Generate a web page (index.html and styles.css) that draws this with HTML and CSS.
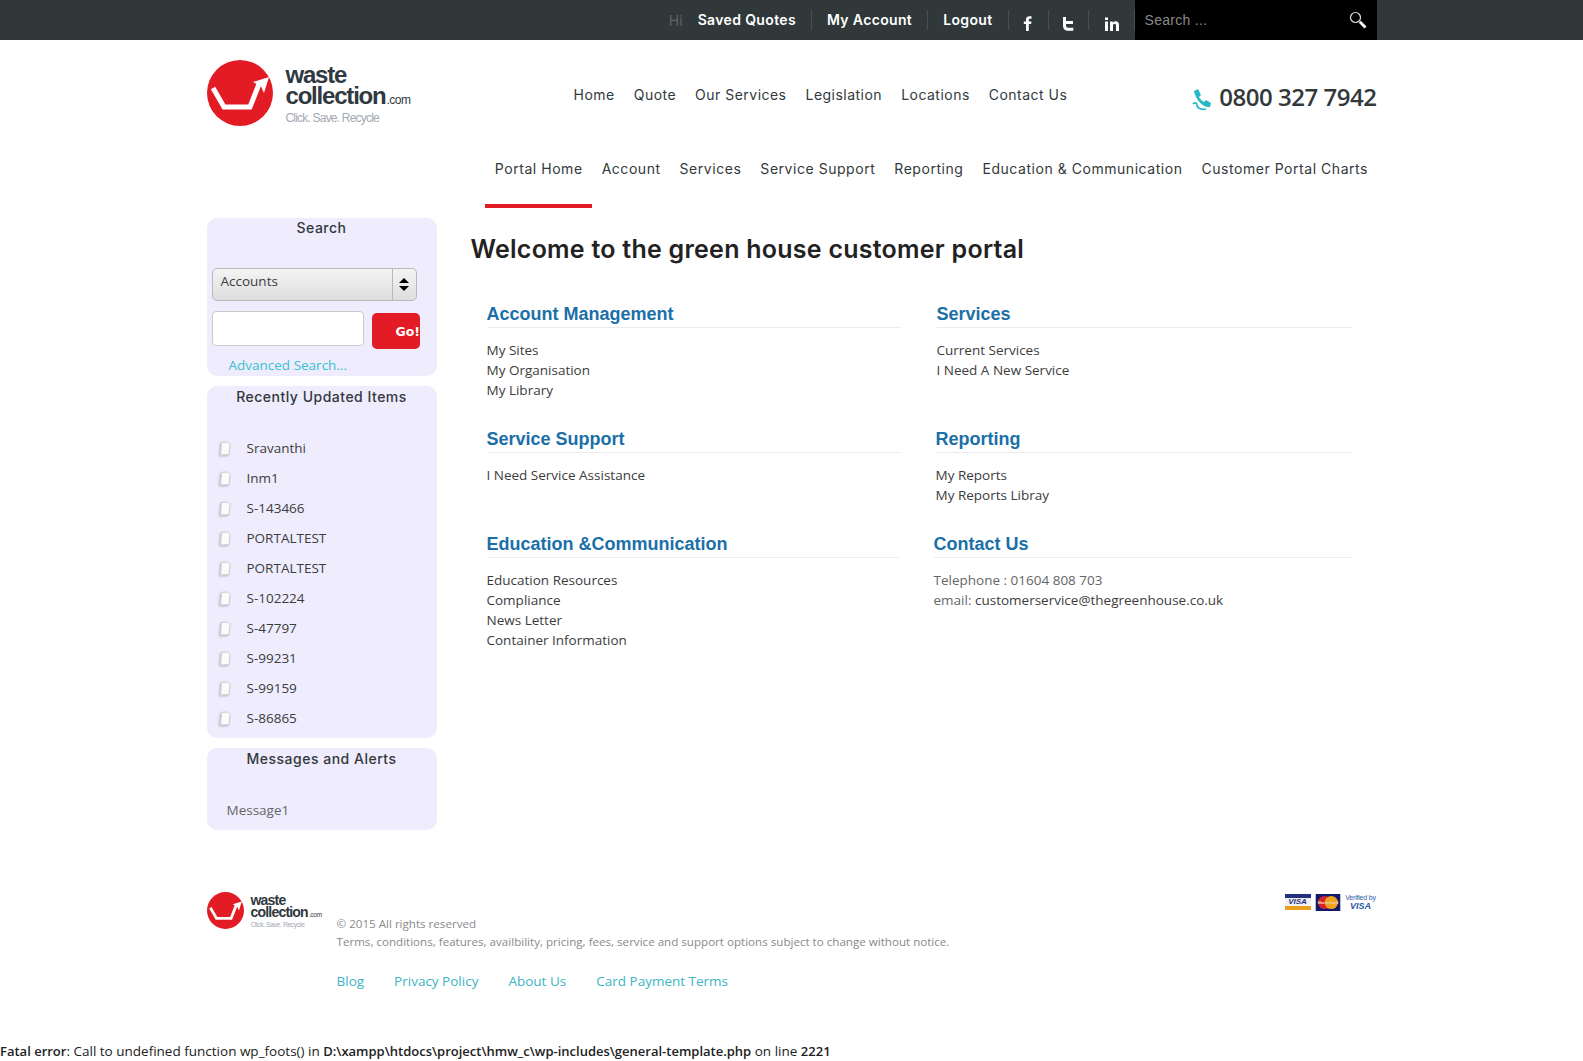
FILE: index.html
```html
<!DOCTYPE html>
<html lang="en">

<head>
  <meta charset="UTF-8">
  <meta name="viewport" content="width=device-width, initial-scale=1.0">
  <title>Customer Portal</title>
  <link rel="stylesheet" href="styles.css">
</head>

<body>
  <div class="topbar">
    <div class="wrap topbar-inner">
      <span class="hi">Hi</span>
      <a class="top-link first">Saved Quotes</a>
      <a class="top-link">My Account</a>
      <a class="top-link">Logout</a>
      <a class="top-icon">
        <svg width="10" height="15" viewBox="0 0 10 15"><path fill="#fff" d="M3 15V8H.8V5.4H3V3.6C3 1.3 4.3.2 6.3.2c1 0 1.900.1 2.200.1v2.400H7.100C6 2.700 5.800 3.300 5.800 4v1.400h2.700L8.100 8H5.800v7z"/></svg>
      </a>
      <a class="top-icon">
        <svg width="12" height="14" viewBox="0 0 12 14"><path fill="none" stroke="#fff" stroke-width="3" d="M2.500 0v8.500c0 2.500 1.500 3.800 3.800 3.800h5M2.500 5.500h8.500"/></svg>
      </a>
      <a class="top-icon last">
        <svg width="14" height="14" viewBox="0 0 14 14"><path fill="#fff" d="M0 4.500h3V14H0zM0 .5h3v2.600H0zM5 4.500h2.800v1.300C8.400 4.900 9.400 4.300 10.700 4.300 13 4.300 14 5.800 14 8.200V14h-3V8.800C11 7.500 10.500 6.800 9.500 6.800 8.500 6.800 8 7.600 8 8.800V14H5z"/></svg>
      </a>
      <div class="top-search">
        <span>Search ...</span>
        <svg width="18" height="18" viewBox="0 0 18 18"><circle cx="6.500" cy="6.500" r="5" fill="none" stroke="#ddd" stroke-width="1.200"/><path stroke="#fff" stroke-width="2.800" d="M10.800 10.800l5.700 5.700"/></svg>
      </div>
    </div>
  </div>

  <div class="wrap">
    <header class="header">
      <div class="logo">
        <svg class="logo-mark" viewBox="0 0 66 66"><circle cx="33" cy="33" r="33" fill="#e21b24"/><path fill="none" stroke="#fff" stroke-width="5" d="M6 28l11 19h26l9-23"/><path fill="#fff" d="M62 17L46 22l4.500 2.500 3.500 2 3 6.500z"/></svg>
        <div class="logo-text">
          <div class="logo-name">waste</div>
          <div class="logo-name">collection<small>.com</small></div>
          <div class="logo-tag">Click. Save. Recycle</div>
        </div>
      </div>
      <nav class="main-nav">
        <a>Home</a>
        <a>Quote</a>
        <a>Our Services</a>
        <a>Legislation</a>
        <a>Locations</a>
        <a>Contact Us</a>
      </nav>
      <div class="phone">
        <svg class="phone-icon" width="20" height="22" viewBox="0 0 20 22"><path fill="none" stroke="#27b8c6" stroke-width="1.700" d="M1 15c2-2 4-1 4 1 0 3 4 5 9 4"/><path fill="#27b8c6" d="M2 2l4-2 3 6-2 2c1 2 3 4 5 5l2-2 5 3-1 4C12 19 4 12 2 2z"/></svg>
        <span>0800 327 7942</span>
      </div>
    </header>

    <nav class="portal-nav">
      <a class="active">Portal Home</a>
      <a>Account</a>
      <a>Services</a>
      <a>Service Support</a>
      <a>Reporting</a>
      <a>Education &amp; Communication</a>
      <a>Customer Portal Charts</a>
    </nav>

    <div class="columns">
      <aside class="sidebar">
        <section class="panel panel-search">
          <h3>Search</h3>
          <div class="select">
            <span class="select-label">Accounts</span>
            <span class="select-arrows"><i class="up"></i><i class="down"></i></span>
          </div>
          <div class="search-row">
            <input class="search-input" type="text">
            <button class="go">Go!</button>
          </div>
          <a class="advanced">Advanced Search...</a>
        </section>

        <section class="panel panel-recent">
          <h3>Recently Updated Items</h3>
          <ul class="recent">
            <li><svg class="doc" viewBox="0 0 14 15"><path fill="#fbfbfb" stroke="#cfcfcf" d="M3.500 1.500l6-.5 2.500 2.500-1 10-8.500.5z"/></svg>Sravanthi</li>
            <li><svg class="doc" viewBox="0 0 14 15"><path fill="#fbfbfb" stroke="#cfcfcf" d="M3.500 1.500l6-.5 2.500 2.500-1 10-8.500.5z"/></svg>Inm1</li>
            <li><svg class="doc" viewBox="0 0 14 15"><path fill="#fbfbfb" stroke="#cfcfcf" d="M3.500 1.500l6-.5 2.500 2.500-1 10-8.500.5z"/></svg>S-143466</li>
            <li><svg class="doc" viewBox="0 0 14 15"><path fill="#fbfbfb" stroke="#cfcfcf" d="M3.500 1.500l6-.5 2.500 2.500-1 10-8.500.5z"/></svg>PORTALTEST</li>
            <li><svg class="doc" viewBox="0 0 14 15"><path fill="#fbfbfb" stroke="#cfcfcf" d="M3.500 1.500l6-.5 2.500 2.500-1 10-8.500.5z"/></svg>PORTALTEST</li>
            <li><svg class="doc" viewBox="0 0 14 15"><path fill="#fbfbfb" stroke="#cfcfcf" d="M3.500 1.500l6-.5 2.500 2.500-1 10-8.500.5z"/></svg>S-102224</li>
            <li><svg class="doc" viewBox="0 0 14 15"><path fill="#fbfbfb" stroke="#cfcfcf" d="M3.500 1.500l6-.5 2.500 2.500-1 10-8.500.5z"/></svg>S-47797</li>
            <li><svg class="doc" viewBox="0 0 14 15"><path fill="#fbfbfb" stroke="#cfcfcf" d="M3.500 1.500l6-.5 2.500 2.500-1 10-8.500.5z"/></svg>S-99231</li>
            <li><svg class="doc" viewBox="0 0 14 15"><path fill="#fbfbfb" stroke="#cfcfcf" d="M3.500 1.500l6-.5 2.500 2.500-1 10-8.500.5z"/></svg>S-99159</li>
            <li><svg class="doc" viewBox="0 0 14 15"><path fill="#fbfbfb" stroke="#cfcfcf" d="M3.500 1.500l6-.5 2.500 2.500-1 10-8.500.5z"/></svg>S-86865</li>
          </ul>
        </section>

        <section class="panel panel-messages">
          <h3>Messages and Alerts</h3>
          <p class="message">Message1</p>
        </section>
      </aside>

      <main class="content">
        <h1>Welcome to the green house customer portal</h1>
        <div class="blocks">
          <div class="block-row row-one">
            <div class="block">
              <h2><span>Account Management</span></h2>
              <a>My Sites</a>
              <a>My Organisation</a>
              <a>My Library</a>
            </div>
            <div class="block">
              <h2><span>Services</span></h2>
              <a>Current Services</a>
              <a>I Need A New Service</a>
            </div>
          </div>
          <div class="block-row row-two">
            <div class="block">
              <h2><span>Service Support</span></h2>
              <a>I Need Service Assistance</a>
            </div>
            <div class="block">
              <h2><span>Reporting</span></h2>
              <a>My Reports</a>
              <a>My Reports Libray</a>
            </div>
          </div>
          <div class="block-row row-three">
            <div class="block">
              <h2><span>Education &amp;Communication</span></h2>
              <a>Education Resources</a>
              <a>Compliance</a>
              <a>News Letter</a>
              <a>Container Information</a>
            </div>
            <div class="block">
              <h2><span>Contact Us</span></h2>
              <p class="tel">Telephone : 01604 808 703</p>
              <p class="tel">email: <a class="inline">customerservice@thegreenhouse.co.uk</a></p>
            </div>
          </div>
        </div>
      </main>
    </div>

    <footer class="footer">
      <div class="logo logo-small">
        <svg class="logo-mark" viewBox="0 0 66 66"><circle cx="33" cy="33" r="33" fill="#e21b24"/><path fill="none" stroke="#fff" stroke-width="5" d="M6 28l11 19h26l9-23"/><path fill="#fff" d="M62 17L46 22l4.500 2.500 3.500 2 3 6.500z"/></svg>
        <div class="logo-text">
          <div class="logo-name">waste</div>
          <div class="logo-name">collection<small>.com</small></div>
          <div class="logo-tag">Click. Save. Recycle</div>
        </div>
      </div>
      <div class="footer-text">
        <p>© 2015 All rights reserved</p>
        <p>Terms, conditions, features, availbility, pricing, fees, service and support options subject to change without notice.</p>
        <div class="footer-links">
          <a>Blog</a>
          <a>Privacy Policy</a>
          <a>About Us</a>
          <a>Card Payment Terms</a>
        </div>
      </div>
      <div class="cards">
        <div class="card-visa"><span>VISA</span></div>
        <svg class="card-mc" viewBox="0 0 26 18"><rect width="26" height="18" fill="#101a6b"/><circle cx="9.500" cy="9" r="7" fill="#d8232a"/><circle cx="16.500" cy="9" r="7" fill="#f0a21e"/><text x="13" y="10.500" text-anchor="middle" font-family="Liberation Sans" font-size="4" font-weight="700" fill="#f3d9c0">MasterCard</text></svg>
        <div class="card-verified">Verified by<b>VISA</b></div>
      </div>
    </footer>
  </div>

  <p class="fatal"><b>Fatal error</b>: Call to undefined function wp_foots() in <b>D:\xampp\htdocs\project\hmw_c\wp-includes\general-template.php</b> on line <b>2221</b></p>
</body>

</html>
```

FILE: styles.css
```css
* {
  box-sizing: border-box;
}

body {
  margin: 0;
  background: #fff;
  font-family: "Open Sans", sans-serif;
  font-size: 13.500px;
  color: #3c3c3c;
}

a {
  color: inherit;
  text-decoration: none;
}

.wrap {
  width: 1170px;
  margin: 0 auto;
}

/* top bar */
.topbar {
  height: 40px;
  background: #30383a;
}

.topbar-inner {
  display: flex;
  justify-content: flex-end;
  align-items: center;
  height: 40px;
  font-family: Inter, sans-serif;
}

.hi {
  color: #5d6466;
  font-size: 14px;
  margin-right: 15px;
}

.top-link {
  height: 20px;
  line-height: 20px;
  padding: 0 15px;
  border-right: 1px solid #474e50;
  color: #fff;
  font-size: 14px;
  font-weight: 600;
  letter-spacing: 0.350px;
}

.top-link.first {
  padding-left: 0;
}

.top-icon {
  display: flex;
  justify-content: center;
  align-items: flex-end;
  width: 40px;
  height: 20px;
  border-right: 1px solid #474e50;
}

.top-icon svg {
  margin-bottom: -1px;
}

.top-icon.last {
  width: 46px;
  padding-left: 2px;
}

.top-search {
  display: flex;
  justify-content: space-between;
  align-items: center;
  width: 242px;
  height: 40px;
  padding: 0 10px;
  background: #000;
  color: #8a8a8a;
  font-family: "Liberation Sans", sans-serif;
  font-size: 14px;
  letter-spacing: 0.300px;
}

/* header */
.header {
  position: relative;
  display: flex;
  align-items: flex-start;
  height: 92px;
}

.logo {
  display: flex;
  align-items: center;
  gap: 13px;
  padding-top: 20px;
}

.logo-mark {
  width: 66px;
  height: 66px;
  flex: none;
}

.logo-text {
  padding-top: 3px;
  font-family: "Liberation Sans", sans-serif;
  color: #303841;
}

.logo-name {
  font-size: 24px;
  line-height: 21px;
  font-weight: 700;
  letter-spacing: -1.200px;
}

.logo-name small {
  margin-left: 1px;
  font-size: 12px;
  font-weight: 400;
  letter-spacing: -0.500px;
}

.logo-tag {
  color: #a3a9b2;
  font-size: 12px;
  letter-spacing: -0.800px;
}

.main-nav {
  display: flex;
  gap: 19px;
  margin: 46px 0 0 163px;
  font-family: Inter, sans-serif;
  font-size: 14px;
  letter-spacing: 0.480px;
  color: #33393b;
}

.phone {
  display: flex;
  align-items: center;
  gap: 7px;
  margin: 40px 0 0 auto;
  font-size: 24px;
  font-weight: 600;
  color: #33393b;
  letter-spacing: -0.470px;
}

.phone-icon {
  margin-top: 6px;
}

/* portal menu */
.portal-nav {
  display: flex;
  justify-content: flex-end;
  height: 76px;
  font-family: Inter, sans-serif;
  font-size: 14px;
  letter-spacing: 0.540px;
  color: #33393b;
}

.portal-nav a {
  height: 76px;
  padding: 28px 9.500px 0;
}

.portal-nav a:last-child {
  padding-right: 8.500px;
}

.portal-nav a.active {
  border-bottom: 4px solid #e21b24;
}

/* columns */
.columns {
  display: flex;
  align-items: flex-start;
  margin-top: 10px;
}

.sidebar {
  display: flex;
  flex-direction: column;
  gap: 10px;
  flex: none;
  width: 230px;
}

.panel {
  background: #eeecfd;
  border-radius: 10px;
}

.panel h3 {
  margin: 0;
  text-align: center;
  font-family: Inter, sans-serif;
  font-size: 14px;
  font-weight: 500;
  letter-spacing: 0.500px;
  line-height: 20px;
  color: #33393b;
}

.panel-search {
  height: 158px;
  padding-left: 5px;
}

.panel-search h3 {
  margin-left: -5px;
}

.panel-recent {
  padding-top: 1px;
}

.panel-messages {
  height: 82px;
  padding-top: 1px;
}

.select {
  display: flex;
  width: 205px;
  height: 33px;
  margin-top: 30px;
  border: 1px solid #b9b9b9;
  border-radius: 5px;
  background: linear-gradient(#f4f4f4, #dedede);
}

.select-label {
  flex: 1;
  padding-left: 8px;
  line-height: 24px;
}

.select-arrows {
  display: flex;
  flex-direction: column;
  justify-content: center;
  align-items: center;
  gap: 3px;
  width: 24px;
  border-left: 1px solid #b9b9b9;
}

.select-arrows i {
  width: 0;
  height: 0;
  border-left: 5px solid transparent;
  border-right: 5px solid transparent;
}

.select-arrows .up {
  border-bottom: 5px solid #000;
}

.select-arrows .down {
  border-top: 5px solid #000;
}

.search-row {
  display: flex;
  align-items: flex-start;
  gap: 8px;
  margin-top: 10px;
}

.search-input {
  width: 152px;
  height: 35px;
  border: 1px solid #c9c9c9;
  border-radius: 4px;
  background: #fff;
}

.go {
  width: 48px;
  height: 36px;
  margin-top: 2px;
  padding: 0 0 0 24px;
  border: 0;
  border-radius: 5px;
  background: #e21b24;
  color: #fff;
  font-family: "DejaVu Sans", sans-serif;
  font-size: 12.500px;
  font-weight: 700;
  overflow: hidden;
  white-space: nowrap;
}

.advanced {
  display: block;
  margin: 7px 0 0 17px;
  color: #3cc1cf;
}

.recent {
  margin: 26px 0 0;
  padding: 0 0 5px 11px;
  list-style: none;
}

.recent li {
  display: flex;
  align-items: center;
  gap: 15px;
  height: 30px;
}

.doc {
  width: 14px;
  height: 15px;
  flex: none;
  filter: drop-shadow(-1px 1px 1px rgba(0, 0, 0, 0.22));
}

.message {
  margin: 32px 0 0 20px;
  color: #666;
}

/* main column */
.content {
  flex: 1;
  padding-left: 34px;
}

.content h1 {
  margin: 16px 0 0;
  font-family: Inter, sans-serif;
  font-size: 25px;
  font-weight: 600;
  letter-spacing: 0.250px;
  line-height: 30px;
  color: #222;
}

.blocks {
  padding-top: 38px;
}

.block-row {
  display: grid;
  margin-left: 16px;
}

.row-one {
  grid-template-columns: 414px 416px;
  column-gap: 36px;
  height: 125px;
}

.row-two {
  grid-template-columns: 414px 416px;
  column-gap: 35px;
  height: 105px;
}

.row-three {
  grid-template-columns: 412px 418px;
  column-gap: 35px;
}

.block h2 {
  margin: 0 0 12px;
  border-bottom: 1px solid #ececec;
  font-family: "Liberation Sans", sans-serif;
  font-size: 18px;
  font-weight: 700;
  line-height: 25px;
  color: #1a6fa8;
}

.block h2 span {
  display: inline-block;
  margin-bottom: -1px;
  border-bottom: 1px solid #ececec;
}

.block > a {
  display: block;
  line-height: 20px;
}

.tel {
  margin: 0;
  line-height: 20px;
  color: #666;
}

.inline {
  color: #3c3c3c;
}

/* footer */
.footer {
  display: flex;
  align-items: flex-start;
  margin-top: 60px;
}

.logo-small {
  gap: 7px;
  width: 130px;
  flex: none;
  padding-top: 2px;
}

.logo-small .logo-mark {
  width: 37px;
  height: 37px;
}

.logo-small .logo-text {
  padding-top: 0;
}

.logo-small .logo-name {
  font-size: 14px;
  line-height: 12px;
  letter-spacing: -0.800px;
}

.logo-small .logo-name small {
  font-size: 6.500px;
  letter-spacing: -0.300px;
}

.logo-small .logo-tag {
  font-size: 7px;
  letter-spacing: -0.500px;
}

.footer-text {
  padding-top: 25px;
  color: #8a8a8a;
  font-size: 11.600px;
}

.footer-text p {
  margin: 0;
  line-height: 18px;
}

.footer-links {
  display: flex;
  gap: 30px;
  margin-top: 20px;
  color: #3cb5c4;
  font-size: 13.500px;
  line-height: 20px;
}

.cards {
  display: flex;
  gap: 4px;
  margin-left: auto;
  padding-top: 4px;
}

.card-visa {
  width: 26px;
  height: 16px;
  background: linear-gradient(#23327f 0 4px, #f1f1f1 4px 12px, #e9a01e 12px);
  color: #23327f;
  font-family: "Liberation Sans", sans-serif;
  font-size: 8px;
  font-style: italic;
  font-weight: 700;
  line-height: 16px;
  text-align: center;
}

.card-mc {
  width: 26px;
  height: 17px;
}

.card-verified {
  width: 32px;
  color: #2b5aa4;
  font-family: "Liberation Sans", sans-serif;
  font-size: 7px;
  line-height: 8px;
  text-align: center;
  white-space: nowrap;
  letter-spacing: -0.200px;
}

.card-verified b {
  display: block;
  font-size: 9px;
  font-style: italic;
  letter-spacing: 0;
}

.fatal {
  margin: 50px 0 0;
  line-height: 20px;
  color: #222;
}

.fatal b {
  font-size: 13px;
  font-weight: 600;
}
```
